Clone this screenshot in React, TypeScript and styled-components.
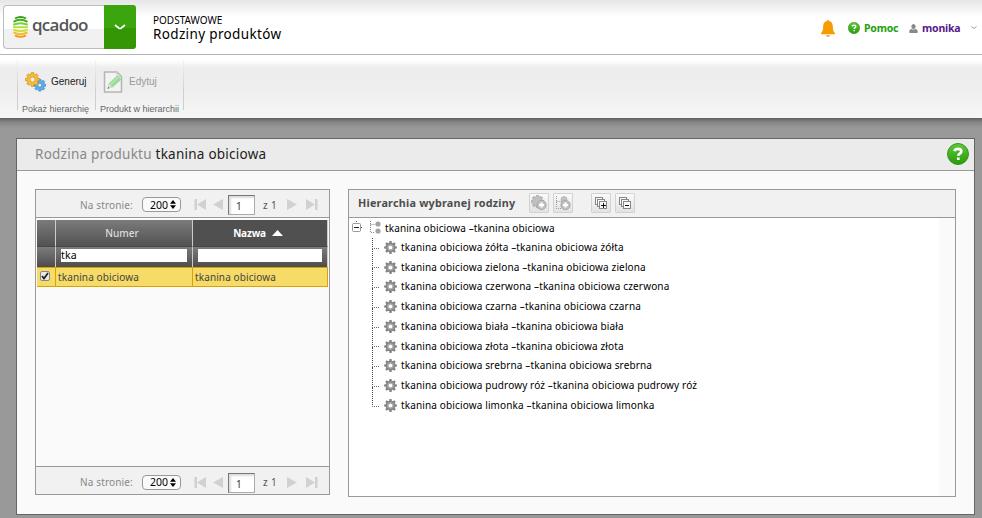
import React from "react";
import styled, { createGlobalStyle } from "styled-components";

const Global = createGlobalStyle`
  * { box-sizing: border-box; }
  body { margin: 0; background: #999; font-family: "Noto Sans", "Open Sans", sans-serif; font-size: 10px; color: #000; overflow: hidden; }
  svg { display: block; flex: none; }
`;

const Page = styled.div`width: 982px; height: 518px; overflow: hidden; background: #999;`;

const Header = styled.header`
  height: 55px; padding: 5px 5px 0 3px; display: flex; align-items: flex-start;
  background: linear-gradient(#e6e6e6, #fff 17px); border-bottom: 1px solid #b4b4b4;
`;
const LogoBox = styled.div`
  width: 133px; height: 44px; display: flex; border: 1px solid #bdbdbd; border-right: 0; border-radius: 4px;
  background: linear-gradient(#fff 0 23px, #f1f1f1 23px);
`;
const LogoName = styled.span`
  width: 56px; margin-left: 4px; font: 600 17px/38px "Open Sans", sans-serif; letter-spacing: -0.75px; color: #555;
`;
const LogoMark = styled.div`width: 24px; padding: 10px 0 0 9px;`;
const MenuButton = styled.div`
  width: 32px; height: 44px; margin: -1px 0 0 auto; display: grid; place-items: center; border-radius: 0 3px 3px 0;
  background: linear-gradient(#3aa50d 0 23px, #349604 23px);
`;
const Titles = styled.div`padding: 9px 0 0 17px; flex: 1;`;
const Category = styled.div`font-size: 10px; line-height: 13px; letter-spacing: 0;`;
const PageTitle = styled.div`font-size: 13.5px; line-height: 15px; letter-spacing: 0.35px;`;
const UserBar = styled.div`display: flex; align-items: center; height: 46px;`;
const UserLink = styled.span<{ $color: string; $width: number }>`
  width: ${p => p.$width}px; margin: -1px 0 0 4px; font-size: 10.5px; font-weight: 700; letter-spacing: -0.2px;
  color: ${p => p.$color}; white-space: nowrap;
`;

const Ribbon = styled.div`
  height: 63px; padding: 5px 0 0 17px; display: flex;
  background: linear-gradient(#fff 0, #fff 5px, #ededed 13px, #eee 35px, #f6f6f6 61px);
`;
const RibbonGroup = styled.div<{ $width: number }>`
  width: ${p => p.$width}px; height: 50px; border-left: 1px solid #d3d3d3;
  border-image: linear-gradient(#f4f4f4, #cfcfcf 60%, #ccc) 1;
`;
const RibbonAction = styled.div<{ $dim?: boolean }>`
  height: 43px; padding-left: 7px; display: flex; align-items: center; gap: ${p => (p.$dim ? 6 : 5)}px;
  font: 10px "Liberation Sans", sans-serif; color: ${p => (p.$dim ? "#999" : "#222")};
`;
const RibbonLabel = styled.div`
  font: 9px/12px "Liberation Sans", sans-serif; color: #666; padding-left: 4px; white-space: nowrap;
`;
const Shade = styled.div`height: 20px; background: linear-gradient(#606060, #858585 4px, #999 10px);`;

const Panel = styled.section`
  width: 959px; height: 377px; margin-left: 16px; background: #fafafa; border: 1px solid #666;
`;
const PanelHeader = styled.div`
  height: 32px; padding: 0 5px 1px 18px; display: flex; align-items: center; justify-content: space-between;
  background: #ebebeb; border-bottom: 1px solid #999;
`;
const PanelTitle = styled.div`font-size: 13.5px; letter-spacing: 0.24px; color: #888; b { font-weight: 400; color: #222; }`;
const Content = styled.div`display: flex; gap: 18px; padding: 18px; align-items: flex-start;`;

const Grid = styled.div`width: 295px; height: 306px; border: 1px solid #999; display: flex; flex-direction: column;`;
const PagerBar = styled.div<{ $bottom?: boolean }>`
  height: 28px; padding: ${p => (p.$bottom ? 3 : 2)}px 0 0 44px; display: flex; align-items: center; background: #f1f1f1; color: #777;
  border-${p => (p.$bottom ? "top" : "bottom")}: 1px solid #999;
`;
const PerPage = styled.span`width: 62px; color: #888; font-size: 10px; letter-spacing: 0.15px;`;
const PageSize = styled.div`
  width: 39px; height: 15px; margin-right: 13px; padding: 0 4px 0 7px; display: flex; align-items: center; justify-content: space-between;
  background: #fafafa; border: 1px solid #999; border-radius: 4px; color: #000; font-size: 10.5px;
`;
const PageInput = styled.div`
  width: 27px; height: 20px; margin: 1px 8px 0 4px; padding-left: 7px; background: #fff; border: 1px solid #777;
  border-right-color: #aaa; border-bottom-color: #aaa; box-shadow: inset 2px 2px 2px #ddd; line-height: 20px; color: #333;
`;
const PageCount = styled.span`width: 23px; letter-spacing: 0.3px; color: #555;`;

const Table = styled.div`margin: 2px 1px 0; flex: 1;`;
const Row = styled.div`display: grid; grid-template-columns: 19px 137px 1fr;`;
const HeadCell = styled.div<{ $sorted?: boolean }>`
  height: 27px; padding-bottom: 1px; display: flex; align-items: center; justify-content: center; gap: 6px; border-right: 1px solid #ccc;
  background: ${p => (p.$sorted ? "#505050" : "linear-gradient(#7b7b7b, #525252)")}; border-bottom: 1px solid #484848;
  padding-right: 4px;
  font-size: 10px; font-weight: ${p => (p.$sorted ? 700 : 500)}; letter-spacing: ${p => (p.$sorted ? -0.2 : 0)}px; color: ${p => (p.$sorted ? "#fff" : "#ddd")};
`;
const FilterCell = styled.div`
  height: 20px; padding: 2px 5px; border-right: 1px solid #ccc; background: linear-gradient(#7c7c7c, #4c4c4c);
`;
const Filter = styled.div`height: 13px; background: #fff; line-height: 13px; font-size: 10.5px; letter-spacing: 0.2px;`;
const DataCell = styled.div`
  height: 20px; padding-left: 2px; background: #f6db66; border: 1px solid #d9a007; border-width: 1px 1px 1px 0;
  line-height: 18px; color: #444; font-size: 10px; letter-spacing: 0.11px; white-space: nowrap;
`;
const Check = styled.div`
  width: 10px; height: 10px; margin: 3px 0 0 1px; display: grid; place-items: center; border: 1px solid #888; border-radius: 2px; background: #e9e9e9;
`;

const Tree = styled.div`width: 608px; height: 308px; border: 1px solid #999;`;
const TreeHeader = styled.div`
  height: 28px; padding: 0 0 1px 9px; display: flex; align-items: center; background: #f1f1f1; border-bottom: 1px solid #999;
`;
const TreeTitle = styled.div`width: 171px; margin-top: -1px; font-size: 10.8px; font-weight: 700; color: #4d4d4d; letter-spacing: 0.22px; white-space: nowrap;`;
const ToolButton = styled.div<{ $gap?: number }>`
  width: 20px; height: 20px; margin-right: ${p => p.$gap ?? 4}px; display: grid; place-items: center;
  border: 1px solid #d2d2d2; border-radius: 1px; background: linear-gradient(#fafafa, #e2e2e2);
`;
const TreeBody = styled.div`width: 590px; height: 278px; background: #fff;`;
const Node = styled.div`
  height: 19.5px; padding-left: 3px; display: flex; align-items: center; gap: 6px; font-size: 10px; letter-spacing: 0.11px; white-space: nowrap;
`;
const NodeText = styled.span`margin-left: -2px;`;
const Leaves = styled.div`padding-left: 23px;`;
const Leaf = styled.div`height: 19.75px; display: flex; align-items: center; font-size: 10px; letter-spacing: 0.14px; white-space: nowrap;`;
const Branch = styled.div<{ $last: boolean }>`
  width: 7px; align-self: stretch; margin-right: 5px;
  &::before { content: ""; display: block; height: 10px; border-left: 1px dotted #444; border-bottom: 1px dotted #666; }
  &::after { content: ""; display: ${p => (p.$last ? "none" : "block")}; height: 9.75px; border-left: 1px dotted #444; }
`;
const LeafText = styled.span`margin: -1px 0 0 4px;`;

const toothed = (cx: number, cy: number, r: number, teeth = 8) => {
  const pts: string[] = [];
  for (let i = 0; i < teeth; i++) {
    [[-0.34, 0.76], [-0.22, 1], [0.22, 1], [0.34, 0.76]].forEach(([o, s]) => {
      const a = ((i + o) * 2 * Math.PI) / teeth - Math.PI / 2;
      pts.push(`${(cx + Math.cos(a) * r * s).toFixed(2)},${(cy + Math.sin(a) * r * s).toFixed(2)}`);
    });
  }
  return pts.join(" ");
};

const Gear = () => (
  <svg width="13" height="13" viewBox="0 0 12 12">
    <polygon points={toothed(6, 6, 6)} fill="#858585" />
    <circle cx="6" cy="6" r="3" fill="#aaa" /><circle cx="6" cy="6" r="1.7" fill="#fff" />
  </svg>
);
const Help = ({ size }: { size: number }) => (
  <svg width={size} height={size} viewBox="0 0 22 22">
    <defs><linearGradient id={`help${size}`} x1="0" y1="0" x2="0" y2="1"><stop stopColor="#61c83e" /><stop offset="1" stopColor="#279b08" /></linearGradient></defs>
    <circle cx="11" cy="11" r="10.5" fill={`url(#help${size})`} stroke="#36951b" />
    <path d="M7.500 8.200C7.800 6.300 9.200 5.800 11 5.800c2.200 0 3.300 1 3.300 2.600 0 2.200-3 2.200-3 4.300M11.300 14.500v2.500" fill="none" stroke="#fff" strokeWidth="2.700" />
  </svg>
);
const Mark = () => (
  <svg width="15" height="22" viewBox="0 0 15 22">
    <path d="M2 2.500Q7.500-.5 13 2.500" fill="none" stroke="#3a9c1b" strokeWidth="1.900" />
    <path d="M.5 5.800Q7.500 1.800 14.500 5.800" fill="none" stroke="#42ae20" strokeWidth="2" />
    <path d="M.3 8.800Q7.500 5.600 14.700 8.800" fill="none" stroke="#78d32e" strokeWidth="2" />
    <path d="M0 11.200h15" stroke="#a9e13b" strokeWidth="1.800" />
    <path d="M.3 13.600Q7.500 16.600 14.700 13.600" fill="none" stroke="#d7dc31" strokeWidth="2" />
    <path d="M.5 16.400Q7.500 20.200 14.500 16.400" fill="none" stroke="#f5bd23" strokeWidth="2" />
    <path d="M2 19.400Q7.500 22.400 13 19.400" fill="none" stroke="#f39b1e" strokeWidth="1.900" />
  </svg>
);
const Bell = () => (
  <svg width="14" height="18" viewBox="0 0 14 18" fill="#f59d00">
    <path d="M6 2a1 1 0 1 1 2 0c3 .7 3.800 2.600 3.800 5.200 0 4 .7 5.300 2.200 7v1.100H0v-1.100c1.500-1.700 2.200-3 2.200-7C2.200 4.600 3 2.700 6 2zM5 16.300h4C8.700 17.500 8 18 7 18s-1.700-.5-2-1.700z" />
  </svg>
);
const User = () => (
  <svg width="9" height="9" viewBox="0 0 10 10" fill="#888">
    <ellipse cx="5" cy="2.800" rx="2.400" ry="2.800" /><path d="M1 10Q0 10 .3 8 .6 5.500 3 5.500q2 1.200 4 0 2.400 0 2.700 2.500Q10 10 9 10z" />
  </svg>
);
const Gears = () => (
  <svg width="21" height="20" viewBox="0 0 21 20">
    <polygon points={toothed(14.8, 13.2, 6)} fill="#55b0ec" stroke="#3b87c3" strokeWidth=".7" />
    <circle cx="14.800" cy="13.200" r="1.900" fill="#eee" stroke="#3b87c3" strokeWidth=".7" />
    <polygon points={toothed(7.5, 7.5, 7)} fill="#f9bd31" stroke="#cf8a20" strokeWidth=".7" />
    <circle cx="7.500" cy="7.500" r="2.600" fill="#eee" stroke="#cf8a20" strokeWidth=".7" />
  </svg>
);
const Edit = () => (
  <svg width="20" height="22" viewBox="0 0 19 22">
    <path d="M1 1h12.500L18 5.500V21H1z" fill="#f3f3f3" stroke="#b5b5b5" strokeWidth="1.500" />
    <path d="M13.500 1v4.500H18" fill="none" stroke="#c8c8c8" />
    <path d="M4 17.500l1.500-5.200 8.500-8 4 4.200-8.700 7.800z" fill="#9bdc9c" /><path d="M4 17.500l1.500-5 3.600 3.800z" fill="#cce9c7" />
    <path d="M4 17.800l.7-2.200 1.400 1.600z" fill="#777" /><path d="M7 13.500l8-7.500" stroke="#c7f0c5" />
  </svg>
);
const Arrow = ({ back, end }: { back?: boolean; end?: boolean }) => (
  <svg width="12" height="11" viewBox="0 0 12 11" fill="#d1d1d1">
    <g transform={back ? "matrix(-1 0 0 1 12 0)" : undefined}><path d={end ? "M0 0l9 5.500L0 11zM9 0h2.500v11H9z" : "M1 0l10 5.500L1 11z"} /></g>
  </svg>
);
const TreeRoot = () => (
  <svg width="12" height="13" viewBox="0 0 12 13">
    <path d="M1.500 0v11.500H6M1.500 3.500H6" fill="none" stroke="#888" strokeDasharray="1 1" /><circle cx="9" cy="3" r="2.600" fill="#a2a2a2" /><circle cx="9" cy="10" r="2.600" fill="#a2a2a2" />
  </svg>
);
const Minus = () => (
  <svg width="11" height="13" viewBox="0 0 11 13"><path d="M4.500 0v3M9 6.500h2" stroke="#555" strokeDasharray="1 1" /><rect x=".5" y="2.500" width="8" height="8" rx="1" fill="#fff" stroke="#999" /><path d="M2 6.500h5" stroke="#222" /></svg>
);
const AddIcon = ({ branch }: { branch?: boolean }) => (
  <svg width="16" height="16" viewBox="0 0 16 16">
    {branch
      ? <><path d="M1.500 1v12.500H7M1.500 6.500H7" fill="none" stroke="#999" strokeDasharray="1 1" /><circle cx="9" cy="4.500" r="3" fill="#c3c3c3" stroke="#aaa" strokeWidth=".6" /></>
      : <polygon points={toothed(6.5, 6.5, 6.3)} fill="#c0c0c0" stroke="#999" strokeWidth=".6" />}
    <circle cx="10.500" cy="10" r="4.600" fill="#c3c3c3" stroke="#a5a5a5" /><path d="M10.500 7.500v5M8 10h5" stroke="#fff" strokeWidth="2" />
  </svg>
);
const Stack = ({ plus }: { plus?: boolean }) => (
  <svg width="14" height="14" viewBox="0 0 14 14" fill="#f8f8f8" stroke="#888">
    <rect x="1.500" y="1.500" width="7" height="7" /><rect x="3.500" y="3.500" width="7" height="7" /><rect x="5.500" y="5.500" width="7" height="7" />
    <path d={plus ? "M7 9.500h5M9.500 7v5" : "M7 9.500h4"} stroke="#111" />
  </svg>
);

const Pager = ({ bottom }: { bottom?: boolean }) => (
  <PagerBar $bottom={bottom}>
    <PerPage>Na stronie:</PerPage>
    <PageSize>200<svg width="6" height="9" viewBox="0 0 6 9"><path d="M0 3.800L3 0l3 3.800zM0 5.200L3 9l3-3.800z" /></svg></PageSize>
    <Arrow back end /><svg width="6" height="1" /><Arrow back />
    <PageInput>1</PageInput><PageCount>z 1</PageCount>
    <Arrow /><svg width="8" height="1" /><Arrow end />
  </PagerBar>
);

const variants = ["żółta", "zielona", "czerwona", "czarna", "biała", "złota", "srebrna", "pudrowy róż", "limonka"];

export default function App() {
  return (
    <Page>
      <Global />
      <Header>
        <LogoBox>
          <LogoMark><Mark /></LogoMark><LogoName>qcadoo</LogoName>
          <MenuButton><svg width="12" height="6" viewBox="0 0 12 6"><path d="M1 1l4 3.200q1 .6 2 0L11 1" fill="none" stroke="#fff" strokeWidth="1.700" /></svg></MenuButton>
        </LogoBox>
        <Titles><Category>PODSTAWOWE</Category><PageTitle>Rodziny produktów</PageTitle></Titles>
        <UserBar>
          <Bell /><svg width="13" height="1" /><Help size={12} />
          <UserLink $color="#20a20b" $width={45}>Pomoc</UserLink>
          <User /><UserLink $color="#551a8b" $width={49}>monika</UserLink>
          <svg width="6" height="4" viewBox="0 0 6 4"><path d="M.5.500l2.500 2 2.500-2" fill="none" stroke="#999" /></svg>
        </UserBar>
      </Header>
      <Ribbon>
        <RibbonGroup $width={78}><RibbonAction><Gears />Generuj</RibbonAction><RibbonLabel>Pokaż hierarchię</RibbonLabel></RibbonGroup>
        <RibbonGroup $width={88}><RibbonAction $dim><Edit />Edytuj</RibbonAction><RibbonLabel>Produkt w hierarchii</RibbonLabel></RibbonGroup>
        <RibbonGroup $width={1} />
      </Ribbon>
      <Shade />
      <Panel>
        <PanelHeader><PanelTitle>Rodzina produktu <b>tkanina obiciowa</b></PanelTitle><Help size={22} /></PanelHeader>
        <Content>
          <Grid>
            <Pager />
            <Table>
              <Row>
                <HeadCell /><HeadCell>Numer</HeadCell>
                <HeadCell $sorted>Nazwa<svg width="11" height="6" viewBox="0 0 11 6"><path d="M0 6l5.500-6L11 6z" fill="#fff" /></svg></HeadCell>
              </Row>
              <Row><FilterCell /><FilterCell><Filter>tka</Filter></FilterCell><FilterCell><Filter /></FilterCell></Row>
              <Row>
                <DataCell><Check><svg width="8" height="8" viewBox="0 0 8 8"><path d="M1 4l2 2.500L7 1" fill="none" stroke="#222" strokeWidth="1.800" /></svg></Check></DataCell>
                <DataCell>tkanina obiciowa</DataCell><DataCell>tkanina obiciowa</DataCell>
              </Row>
            </Table>
            <Pager bottom />
          </Grid>
          <Tree>
            <TreeHeader>
              <TreeTitle>Hierarchia wybranej rodziny</TreeTitle>
              <ToolButton><AddIcon /></ToolButton><ToolButton $gap={18}><AddIcon branch /></ToolButton>
              <ToolButton><Stack plus /></ToolButton><ToolButton><Stack /></ToolButton>
            </TreeHeader>
            <TreeBody>
              <Node><Minus /><TreeRoot /><NodeText>tkanina obiciowa –tkanina obiciowa</NodeText></Node>
              <Leaves>
                {variants.map((v, i) => (
                  <Leaf key={v}><Branch $last={i === variants.length - 1} /><Gear /><LeafText>{`tkanina obiciowa ${v} –tkanina obiciowa ${v}`}</LeafText></Leaf>
                ))}
              </Leaves>
            </TreeBody>
          </Tree>
        </Content>
      </Panel>
    </Page>
  );
}
